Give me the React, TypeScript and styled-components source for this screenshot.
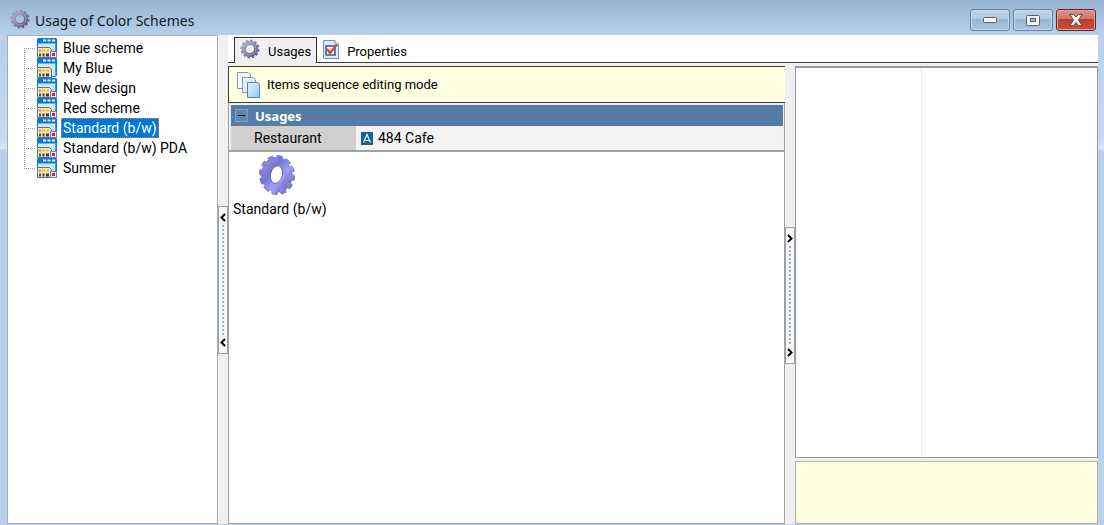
import React from "react";
import styled, { createGlobalStyle } from "styled-components";

const GlobalStyle = createGlobalStyle`
  *, *::before, *::after { box-sizing: border-box; }
  html, body, #root { height: 100%; }
  body {
    margin: 0;
    overflow: hidden;
    background: #b9d1ea;
    color: #000;
    font: 14px/20px Roboto, "Liberation Sans", sans-serif;
  }
  button { font: inherit; color: inherit; }
  svg { display: block; flex: none; }
`;

const Window = styled.div`
  display: flex;
  flex-direction: column;
  height: 100%;
  padding: 0 6px 1px 7px;
  background: linear-gradient(#98b4d2 0, #b9d1ea 36px, #b9d1ea 50px, #c6daef 140px, #dce8f5 149px, #b9d1ea 150px);
`;

const TitleBar = styled.header`
  display: flex;
  align-items: flex-start;
  height: 35px;
  padding: 9px 2px 0 3px;
`;

const Title = styled.h1`
  flex: 1;
  margin: 2px 0 0 5px;
  font: 400 14px/20px "Noto Sans", sans-serif;
  color: #101820;
`;

const WindowButtons = styled.div`
  display: flex;
  gap: 3px;
`;

const WindowButton = styled.button<{ $danger?: boolean }>`
  display: grid;
  place-items: center;
  width: 40px;
  height: 22px;
  padding: 0;
  border: 1px solid ${(p) => (p.$danger ? "#5c2531" : "#6380a3")};
  border-radius: 3px;
  box-shadow: inset 0 0 0 1px ${(p) => (p.$danger ? "#e0a79f" : "#c6d9ee")};
  background: ${(p) =>
    p.$danger
      ? "linear-gradient(#dc9284 0, #cf7464 45%, #bd3d2a 46%, #c8543d 100%)"
      : "linear-gradient(#bdd1e8 0, #b2c9e3 45%, #97b4d3 46%, #abc6e2 100%)"};
`;

const Workspace = styled.div`
  display: flex;
  flex: 1;
  min-height: 0;
  background: #f0f0f0;
`;

const TreePanel = styled.nav`
  width: 211px;
  flex: none;
  padding: 2px 0 0 16px;
  background: #fff;
  border: 1px solid #a5acb8;
`;

const Tree = styled.ul`
  list-style: none;
  margin: 0;
  padding: 0;
`;

const TreeItem = styled.li`
  display: flex;
  align-items: center;
  height: 20px;

  &::before {
    content: "";
    align-self: stretch;
    width: 13px;
    background:
      repeating-linear-gradient(90deg, #999 0 1px, transparent 1px 2px) 0 10px / 12px 1px no-repeat,
      repeating-linear-gradient(#999 0 1px, transparent 1px 2px) 0 0 / 1px 20px no-repeat;
  }
  &:first-child::before {
    background:
      repeating-linear-gradient(90deg, #999 0 1px, transparent 1px 2px) 0 10px / 12px 1px no-repeat,
      repeating-linear-gradient(#999 0 1px, transparent 1px 2px) 0 10px / 1px 10px no-repeat;
  }
  &:last-child::before {
    background:
      repeating-linear-gradient(90deg, #999 0 1px, transparent 1px 2px) 0 10px / 12px 1px no-repeat,
      repeating-linear-gradient(#999 0 1px, transparent 1px 2px) 0 0 / 1px 10px no-repeat;
  }
`;

const TreeLabel = styled.button<{ $selected?: boolean }>`
  margin-left: 4px;
  padding: 0 1px;
  height: 20px;
  line-height: 18px;
  border: 1px ${(p) => (p.$selected ? "dotted #e08a2c" : "solid transparent")};
  background: ${(p) => (p.$selected ? "#0078d7" : "none")};
  color: ${(p) => (p.$selected ? "#fff" : "#000")};
`;

const Splitter = styled.div`
  display: flex;
  flex: none;
  flex-direction: column;
  width: 10px;
  background: #f0f0f0;
`;

const SplitHandle = styled.button<{ $top: number; $height: number }>`
  display: flex;
  flex-direction: column;
  align-items: center;
  justify-content: space-between;
  width: 10px;
  height: ${(p) => p.$height}px;
  margin-top: ${(p) => p.$top}px;
  padding: 6px 0;
  border: 1px solid #a0a0a0;
  background: #f6f6f6;
`;

const Grip = styled.span`
  flex: 1;
  width: 2px;
  margin: 3px 0;
  background: repeating-linear-gradient(#8fb0c8 0 2px, transparent 2px 4px);
`;

const Content = styled.main`
  display: flex;
  flex-direction: column;
  flex: 1;
  min-width: 0;
`;

const Tabs = styled.div`
  display: flex;
  align-items: flex-end;
  height: 28px;
  padding-left: 6px;
  font-size: 13px;
  background: #fff;
  border-bottom: 1px solid #404040;
`;

const Tab = styled.button<{ $active?: boolean }>`
  display: flex;
  align-items: center;
  gap: 8px;
  height: 26px;
  padding: 0 5px;
  margin-bottom: -1px;
  border: 1px solid ${(p) => (p.$active ? "#303030" : "transparent")};
  border-bottom: 0;
  background: ${(p) => (p.$active ? "#f0f0f0" : "none")};

  svg { margin-bottom: 3px; }
`;

const TabText = styled.span`
  padding-top: 2px;
`;

const Columns = styled.div`
  display: flex;
  flex: 1;
  min-height: 0;
  padding-top: 3px;
`;

const Main = styled.section`
  display: flex;
  flex-direction: column;
  flex: 1;
  min-width: 0;
  background: #fff;
`;

const ModeBar = styled.button`
  display: flex;
  align-items: center;
  gap: 7px;
  height: 37px;
  padding: 0 8px;
  border: 1px solid #404030;
  border-right: 0;
  background: #ffffe1;
  font-size: 13px;
  text-align: left;
`;

const PropertyGrid = styled.div`
  padding: 2px 1px 0 2px;
  border: solid #a0a0a0;
  border-width: 0 1px 2px 1px;
  background: #f0f0f0;
`;

const GroupHeader = styled.button`
  display: flex;
  align-items: center;
  gap: 7px;
  width: 100%;
  height: 21px;
  padding: 0 4px;
  border: 0;
  background: #557ca6;
  color: #fff;
  font: 700 13px/20px "Noto Sans", sans-serif;
`;

const PropertyTable = styled.table`
  width: 100%;
  border-collapse: collapse;
  table-layout: fixed;

  th, td { height: 24px; padding: 0; font-weight: 400; text-align: left; }
  th { width: 125px; padding-left: 23px; background: #d0d0d0; }
  td { padding-left: 5px; background: #f3f3f3; }
`;

const CellValue = styled.span`
  display: flex;
  align-items: center;
  gap: 5px;
`;

const IconList = styled.div`
  flex: 1;
  padding: 2px 4px;
  border: solid #a0a0a0;
  border-width: 0 1px 1px 1px;
`;

const Tile = styled.button`
  display: flex;
  flex-direction: column;
  align-items: center;
  gap: 3px;
  padding: 0;
  border: 0;
  background: none;

  svg { margin-right: 5px; }
`;

const Side = styled.aside`
  display: flex;
  flex-direction: column;
  flex: none;
  gap: 3px;
  width: 303px;
`;

const Inspector = styled.div`
  display: grid;
  grid-template-columns: 126px 1fr;
  flex: 1;
  border: solid #969aa2;
  border-width: 2px 1px 1px 1px;
  background: #fff;
`;

const InspectorNames = styled.div`
  border-right: 1px solid #ececec;
`;

const Hint = styled.div`
  height: 63px;
  border: 1px solid #adb1a8;
  background: #ffffe1;
`;

function SmallGear({ id }: { id: string }) {
  return (
    <svg width="20" height="20" viewBox="0 0 20 20" aria-hidden="true">
      <defs>
        <linearGradient id={id} x1="0" y1="0" x2="1" y2="1">
          <stop offset="0" stopColor="#a6a5c6" />
          <stop offset="0.5" stopColor="#8381ae" />
          <stop offset="1" stopColor="#55547c" />
        </linearGradient>
      </defs>
      <g fill="none" stroke={`url(#${id})`}>
        <circle cx="10" cy="10" r="6" strokeWidth="4" />
        <circle cx="10" cy="10" r="8.500" pathLength="120" strokeWidth="2" strokeDasharray="6 4" />
      </g>
      <circle cx="10" cy="10" r="6" fill="none" stroke="#b3b2d2" strokeWidth="1" opacity="0.7" />
    </svg>
  );
}

function LargeGear() {
  return (
    <svg width="38" height="42" viewBox="0 0 38 42" aria-hidden="true">
      <defs>
        <linearGradient id="gear-large" x1="0" y1="0" x2="1" y2="1">
          <stop offset="0" stopColor="#8d8fdc" />
          <stop offset="0.35" stopColor="#7375dc" />
          <stop offset="0.65" stopColor="#a09ff4" />
          <stop offset="1" stopColor="#6c6cc4" />
        </linearGradient>
      </defs>
      <g fill="none" stroke="#77778c" transform="translate(1 1)">
        <ellipse cx="18.500" cy="20.500" rx="11" ry="13" strokeWidth="8" />
        <ellipse cx="18.500" cy="20.500" rx="15.500" ry="17.500" pathLength="120" strokeWidth="4" strokeDasharray="6 4" />
      </g>
      <g fill="none" stroke="url(#gear-large)">
        <ellipse cx="18.500" cy="20.500" rx="11" ry="13" strokeWidth="9" />
        <ellipse cx="18.500" cy="20.500" rx="15.500" ry="17.500" pathLength="120" strokeWidth="4" strokeDasharray="6 4" />
      </g>
      <ellipse cx="18.500" cy="20.500" rx="6" ry="9" fill="#fff" stroke="#6a6a9c" transform="rotate(14 18.500 20.500)" />
    </svg>
  );
}

function SchemeIcon({ plain }: { plain?: boolean }) {
  return (
    <svg width="20" height="20" viewBox="0 0 20 20" aria-hidden="true">
      <rect x="0.500" y="0.500" width="19" height="18" rx="1.500" fill="#cfeafc" stroke="#1079d2" />
      <path d="M0 5.500V1.500Q0 0 1.500 0H18.500Q20 0 20 1.500V5.500Z" fill="#0d78d4" />
      <path d="M6 1.500h3v2H6zM10.500 1.500h3v2h-3zM15 1.500h3v2h-3z" fill="#e6f5ff" />
      <path d="M18.500 5V17" stroke="#3c9be6" />
      <path d="M.5 19.500V9.500H12.500L14.500 11.500V19.500Z" fill="#f3e6bd" stroke="#5d6a88" />
      <path d="M2 11.500h2v2H2z" fill="#d9803c" />
      <path d="M5 11.500h3v2H5zM9 11.500h3v2H9z" fill="#e8c32c" />
      <path d="M2 15.500h2v3H2z" fill="#1c7436" />
      <path d="M5.500 15.500h2v3h-2z" fill="#6a2434" />
      <path d="M9 15.500h3v3H9z" fill="#2c357c" />
      {!plain && (
        <>
          <rect x="13.500" y="13.500" width="6" height="6" fill="#fde6ea" stroke="#7882b0" />
          <path d="M15 15h3v3h-3z" fill="#d52245" />
        </>
      )}
    </svg>
  );
}

function CheckIcon() {
  return (
    <svg width="16" height="19" viewBox="0 0 16 19" aria-hidden="true">
      <path d="M.5 .5H12L15.500 4V18.500H.5Z" fill="#dceafa" stroke="#6e95c8" />
      <path d="M12 .5V4H15.500" fill="#fff" stroke="#6e95c8" />
      <rect x="3" y="6" width="9" height="9" fill="#fff" stroke="#39539a" strokeWidth="1.500" />
      <path d="M4 9L7 13L14 4.500" fill="none" stroke="#e3401f" strokeWidth="2.200" />
    </svg>
  );
}

function SequenceIcon() {
  return (
    <svg width="23" height="26" viewBox="0 0 23 26" aria-hidden="true">
      <defs>
        <linearGradient id="sheet" x1="0" y1="0" x2="1" y2="1">
          <stop offset="0" stopColor="#e4f3fc" />
          <stop offset="1" stopColor="#96cbee" />
        </linearGradient>
      </defs>
      <path d="M.5 .5H11L13.500 3V16.500H.5Z" fill="#f5faff" stroke="#7896b8" />
      <path d="M5.500 5.500H16L18.500 8V20.500H5.500Z" fill="#e3f0fa" stroke="#7896b8" />
      <path d="M10.500 10.500H20.500L22.500 12.500V25.500H10.500Z" fill="url(#sheet)" stroke="#5482b4" />
    </svg>
  );
}

function BadgeIcon() {
  return (
    <svg width="12" height="13" viewBox="0 0 12 13" aria-hidden="true">
      <rect width="12" height="13" fill="#17628f" />
      <path d="M2.500 10.500L6 2.500L9.500 10.500M3.500 8.500H8.500" fill="none" stroke="#e8f7ff" strokeWidth="1.200" />
    </svg>
  );
}

function CollapseIcon() {
  return (
    <svg width="13" height="13" viewBox="0 0 13 13" aria-hidden="true">
      <rect x=".5" y=".5" width="12" height="12" fill="#5f86ae" stroke="#7d9fc2" />
      <path d="M3 6.500H10" stroke="#000" />
    </svg>
  );
}

function Chevron({ right }: { right?: boolean }) {
  return (
    <svg width="6" height="9" viewBox="0 0 6 9" aria-hidden="true">
      <path d={right ? "M1 1L4.500 4.500L1 8" : "M5 1L1.500 4.500L5 8"} fill="none" stroke="#000" strokeWidth="2" />
    </svg>
  );
}

const schemes = [
  { name: "Blue scheme" },
  { name: "My Blue", plain: true },
  { name: "New design" },
  { name: "Red scheme" },
  { name: "Standard (b/w)", selected: true },
  { name: "Standard (b/w) PDA" },
  { name: "Summer" },
];

export default function App() {
  return (
    <>
      <GlobalStyle />
      <Window>
        <TitleBar>
          <SmallGear id="gear-title" />
          <Title>Usage of Color Schemes</Title>
          <WindowButtons>
            <WindowButton aria-label="Minimize">
              <svg width="14" height="6" viewBox="0 0 14 6">
                <rect x=".5" y=".5" width="13" height="5" rx="1" fill="#f4f4f4" stroke="#56606e" />
              </svg>
            </WindowButton>
            <WindowButton aria-label="Maximize">
              <svg width="14" height="11" viewBox="0 0 14 11">
                <rect x=".5" y=".5" width="13" height="10" rx="1" fill="#f4f4f4" stroke="#56606e" />
                <rect x="4.500" y="3.500" width="5" height="3" fill="#a2bad5" stroke="#56606e" />
              </svg>
            </WindowButton>
            <WindowButton $danger aria-label="Close">
              <svg width="14" height="12" viewBox="0 0 14 12">
                <path
                  d="M1 .5H4.500L7 3L9.500 .5H13L9.500 6L13 11.500H9.500L7 8.500L4.500 11.500H1L4.500 6Z"
                  fill="#f7f5f5"
                  stroke="#6b4a54"
                />
              </svg>
            </WindowButton>
          </WindowButtons>
        </TitleBar>
        <Workspace>
          <TreePanel aria-label="Color schemes">
            <Tree>
              {schemes.map((s) => (
                <TreeItem key={s.name}>
                  <SchemeIcon plain={s.plain} />
                  <TreeLabel $selected={s.selected}>{s.name}</TreeLabel>
                </TreeItem>
              ))}
            </Tree>
          </TreePanel>
          <Splitter>
            <SplitHandle $top={171} $height={148} aria-label="Collapse the tree">
              <Chevron />
              <Grip />
              <Chevron />
            </SplitHandle>
          </Splitter>
          <Content>
            <Tabs role="tablist">
              <Tab role="tab" aria-selected $active>
                <SmallGear id="gear-tab" />
                <TabText>Usages</TabText>
              </Tab>
              <Tab role="tab" aria-selected={false}>
                <CheckIcon />
                <TabText>Properties</TabText>
              </Tab>
            </Tabs>
            <Columns>
              <Main>
                <ModeBar>
                  <SequenceIcon />
                  Items sequence editing mode
                </ModeBar>
                <PropertyGrid>
                  <GroupHeader aria-expanded>
                    <CollapseIcon />
                    Usages
                  </GroupHeader>
                  <PropertyTable>
                    <tbody>
                      <tr>
                        <th scope="row">Restaurant</th>
                        <td>
                          <CellValue>
                            <BadgeIcon />
                            484 Cafe
                          </CellValue>
                        </td>
                      </tr>
                    </tbody>
                  </PropertyTable>
                </PropertyGrid>
                <IconList>
                  <Tile>
                    <LargeGear />
                    Standard (b/w)
                  </Tile>
                </IconList>
              </Main>
              <Splitter>
                <SplitHandle $top={161} $height={137} aria-label="Collapse the inspector">
                  <Chevron right />
                  <Grip />
                  <Chevron right />
                </SplitHandle>
              </Splitter>
              <Side>
                <Inspector>
                  <InspectorNames />
                </Inspector>
                <Hint />
              </Side>
            </Columns>
          </Content>
        </Workspace>
      </Window>
    </>
  );
}
